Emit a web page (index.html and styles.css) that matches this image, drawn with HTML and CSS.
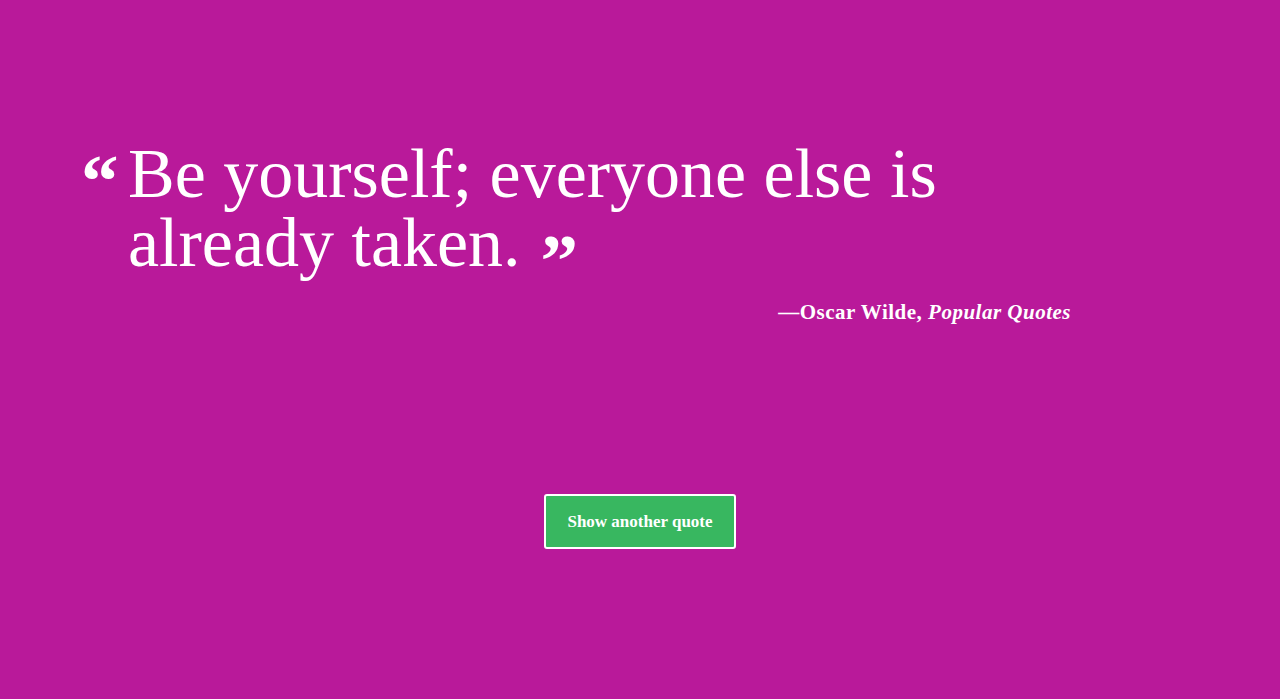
FILE: index.html
```html
<!DOCTYPE html>
<html lang="en">
<head>
<meta charset="utf-8">
<title>Random Quote</title>
<link rel="stylesheet" href="styles.css">
</head>
<body>
<main class="page">
  <section class="quote-box">
    <blockquote class="quote">
      <span class="mark open">&ldquo;</span>
      <p class="quote-text">Be yourself; everyone else is already taken.<span class="mark close">&rdquo;</span></p>
    </blockquote>
    <p class="author">&mdash;Oscar Wilde, <cite>Popular Quotes</cite></p>
  </section>
  <div class="actions">
    <button class="btn" type="button">Show another quote</button>
  </div>
</main>
</body>
</html>
```

FILE: styles.css
```css
html, body {
  margin: 0;
  padding: 0;
  height: 100%;
}
body {
  background: #b9199a;
  color: #ffffff;
  font-family: "Liberation Serif", "Times New Roman", serif;
}
.page {
  height: 699px;
  display: flex;
  flex-direction: column;
}
.quote-box {
  width: 987px;
  margin-left: 84px;
  padding-top: 139px;
}
.quote {
  margin: 0;
  display: flex;
  align-items: flex-start;
}
.mark {
  font-family: "Liberation Serif", serif;
  font-weight: 700;
  font-size: 75px;
}
.mark.open {
  width: 47px;
  flex: none;
  line-height: 1;
  margin-top: 4px;
  margin-left: -3px;
}
.mark.close {
  display: inline-block;
  line-height: 0;
  vertical-align: -20px;
  margin-left: 20px;
}
.quote-text {
  margin: 0;
  font-size: 70px;
  line-height: 69px;
  width: 820px;
}
.author {
  margin: 23px 0 0;
  text-align: right;
  font-size: 21px;
  font-weight: 700;
  letter-spacing: 0.5px;
}
.author cite {
  font-style: italic;
}
.actions {
  display: flex;
  justify-content: center;
  margin-top: 169px;
}
.btn {
  font-family: "Liberation Serif", "Times New Roman", serif;
  font-size: 17px;
  font-weight: 700;
  color: #ffffff;
  background: #38b760;
  border: 2px solid #ffffff;
  border-radius: 3px;
  width: 192px;
  height: 55px;
  padding: 0;
  cursor: pointer;
}
```
